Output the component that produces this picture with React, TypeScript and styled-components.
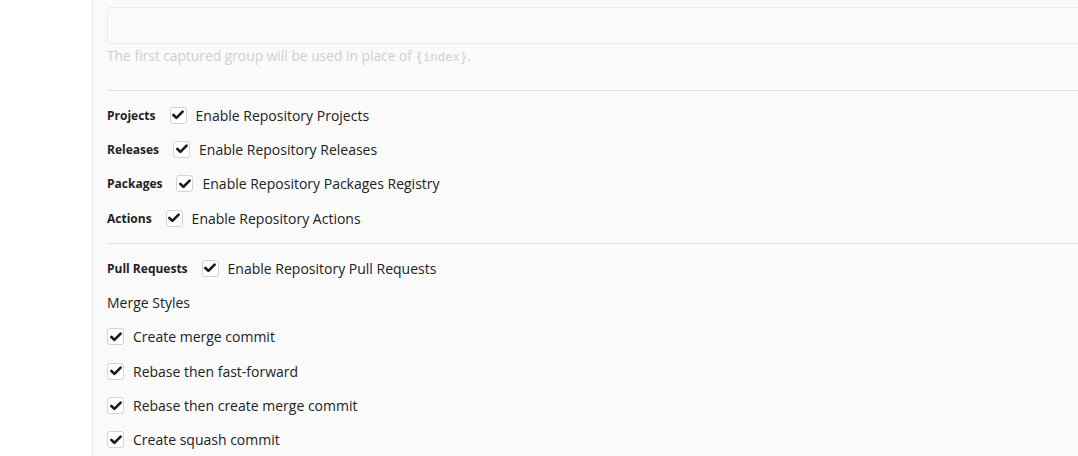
import React from "react";
import styled, { createGlobalStyle } from "styled-components";

const Global = createGlobalStyle`
  html, body { margin: 0; padding: 0; background: #ffffff; overflow: hidden; }
  body { font-family: "Open Sans", "Noto Sans", sans-serif; color: #222; }
`;

const Page = styled.div`
  display: flex;
  width: 1078px;
  height: 456px;
  overflow: hidden;
`;

const Side = styled.div`
  width: 92px;
  flex: none;
  background: #ffffff;
`;

const Panel = styled.div`
  flex: none;
  width: 1100px;
  border-left: 1px solid #e6e6e6;
  background: #fafafa;
  padding: 7px 0 0 14px;
  box-sizing: border-box;
`;

const Disabled = styled.div`
  opacity: 0.45;
`;

const Input = styled.div`
  height: 37px;
  box-sizing: border-box;
  border: 1px solid #dcdcdc;
  border-radius: 4px;
  background: #fdfdfd;
`;

const Help = styled.div`
  margin-top: 3px;
  font-size: 13.8px;
  line-height: 18px;
  color: #9a9a9a;
  code {
    font-family: "DejaVu Sans Mono", monospace;
    font-size: 12.3px;
  }
`;

const Divider = styled.hr<{ $top: number }>`
  margin: ${(p) => p.$top}px 0 0 0;
  border: none;
  border-top: 1px solid #e4e4e4;
`;

const Group = styled.div`
  padding-top: 7px;
`;

const Row = styled.div`
  display: flex;
  align-items: center;
  height: 34.3px;
`;

const Label = styled.span`
  font-weight: 700;
  font-size: 12px;
  margin-right: 14px;
`;

const Box = styled.span`
  width: 17px;
  height: 17px;
  box-sizing: border-box;
  border: 1px solid #d4d4d4;
  border-radius: 3px;
  background: #fff;
  display: inline-flex;
  align-items: center;
  justify-content: center;
  margin-right: 9px;
  flex: none;
`;

const Text = styled.span`
  font-size: 14px;
`;

const Heading = styled.div`
  font-size: 14px;
  height: 34.3px;
  display: flex;
  align-items: center;
`;

const Check = () => (
  <Box>
    <svg width="12" height="10" viewBox="0 0 12 10">
      <path d="M1.4 5 L4.4 7.9 L10.6 1.6" fill="none" stroke="#1a1a1a" strokeWidth="2.6" strokeLinecap="round" strokeLinejoin="round" />
    </svg>
  </Box>
);

const units = [
  { label: "Projects", text: "Enable Repository Projects" },
  { label: "Releases", text: "Enable Repository Releases" },
  { label: "Packages", text: "Enable Repository Packages Registry" },
  { label: "Actions", text: "Enable Repository Actions" },
];

const merges = [
  "Create merge commit",
  "Rebase then fast-forward",
  "Rebase then create merge commit",
  "Create squash commit",
];

export default function App() {
  return (
    <>
      <Global />
      <Page>
        <Side />
        <Panel>
          <Disabled>
            <Input />
            <Help>
              The first captured group will be used in place of <code>{"{index}"}</code>.
            </Help>
          </Disabled>
          <Divider $top={24} />
          <Group>
            {units.map((u) => (
              <Row key={u.label}>
                <Label>{u.label}</Label>
                <Check />
                <Text>{u.text}</Text>
              </Row>
            ))}
          </Group>
          <Divider $top={8} />
          <Group>
            <Row>
              <Label>Pull Requests</Label>
              <Check />
              <Text>Enable Repository Pull Requests</Text>
            </Row>
            <Heading>Merge Styles</Heading>
            {merges.map((m) => (
              <Row key={m}>
                <Check />
                <Text>{m}</Text>
              </Row>
            ))}
          </Group>
        </Panel>
      </Page>
    </>
  );
}
